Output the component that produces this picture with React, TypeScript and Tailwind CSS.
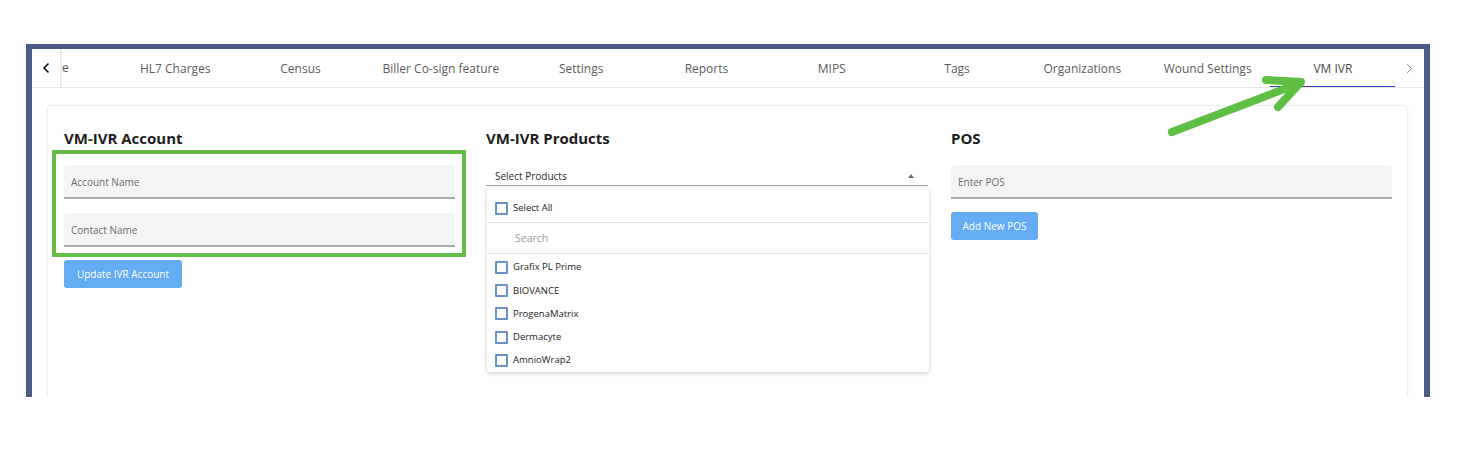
import { ChevronLeft, ChevronRight } from "lucide-react";

const tabs = [
  { label: "HL7 Charges", w: "w-[125.3px]" },
  { label: "Census", w: "w-[125.3px]" },
  { label: "Biller Co-sign feature", w: "w-[155.3px]" },
  { label: "Settings", w: "w-[125.3px]" },
  { label: "Reports", w: "w-[125.3px]" },
  { label: "MIPS", w: "w-[125.3px]" },
  { label: "Tags", w: "w-[125.3px]" },
  { label: "Organizations", w: "w-[125.3px]" },
  { label: "Wound Settings", w: "w-[125.3px]" },
  { label: "VM IVR", w: "w-[125.3px]", active: true },
];

const products = ["Grafix PL Prime", "BIOVANCE", "ProgenaMatrix", "Dermacyte", "AmnioWrap2"];

function Checkbox() {
  return <span className="block h-[13px] w-[13px] shrink-0 rounded-[1px] border-2 border-[#6990ca]" />;
}

function FilledInput({ label }: { label: string }) {
  return (
    <div className="flex h-[34px] items-center rounded-t-[4px] border-b-2 border-[#ababab] bg-[#f4f4f4] pl-[7px] pt-[3px] text-[10px] text-[#6b6b6b]">
      {label}
    </div>
  );
}

function Heading({ children }: { children: string }) {
  return <h2 className="h-[24px] text-[15px] font-bold leading-[24px] text-[#1d1d1d]">{children}</h2>;
}

export default function App() {
  return (
    <div className="relative h-[462px] w-[1472px] bg-white pl-[26px] pt-[44px] font-['Open_Sans',sans-serif]">
      <div className="h-[353px] w-[1404px] overflow-hidden border-x-[6px] border-t-[5px] border-[#4b5a87] bg-white">
        {/* tab bar */}
        <div className="flex h-[39px] border-b border-[#e7e7e7]">
          <div className="flex w-[30px] items-center justify-center border-r-2 border-[#ececec]">
            <ChevronLeft size={16} strokeWidth={2.6} className="text-[#111]" />
          </div>
          <div className="flex flex-1 overflow-hidden">
            <div className="flex w-[50.6px] shrink-0 items-center text-[12px] text-[#5c5c5c]">e</div>
            {tabs.map((t) => (
              <div
                key={t.label}
                className={`relative flex shrink-0 items-center justify-center whitespace-nowrap pt-[1px] text-[12px] ${t.w} ${t.active ? "text-[#4a4a4a]" : "text-[#5c5c5c]"}`}
              >
                {t.label}
                {t.active ? <span className="absolute bottom-[-1px] left-0 h-[2px] w-full bg-[#3d3dc6]" /> : null}
              </div>
            ))}
          </div>
          <div className="flex w-[29px] items-center justify-center">
            <ChevronRight size={17} strokeWidth={1.4} className="text-[#8a8a8a]" />
          </div>
        </div>

        {/* card */}
        <div className="ml-[15px] mt-[17px] h-[400px] w-[1361px] rounded-[4px] border border-[#eeeeee] pl-[16px] pt-[20px] shadow-[0_0_3px_rgba(0,0,0,0.05)]">
          <div className="flex">
            <section className="relative w-[391px]">
              <Heading>VM-IVR Account</Heading>
              <div className="mt-[15px]">
                <FilledInput label="Account Name" />
              </div>
              <div className="mt-[14px]">
                <FilledInput label="Contact Name" />
              </div>
              <button className="mt-[13px] h-[28px] w-[118px] rounded-[3px] bg-[#63acf3] text-[10px] text-white">
                Update IVR Account
              </button>
              <div className="pointer-events-none absolute left-[-12px] top-[24px] h-[107px] w-[414px] border-4 border-[#62be48]" />
            </section>

            <section className="ml-[31px] w-[442px]">
              <Heading>VM-IVR Products</Heading>
              <div className="mt-[16px] flex h-[20px] items-center justify-between border-b border-[#9e9e9e] pl-[9px] pr-[14px] pt-[1px] text-[10px] font-medium text-[#2a2a2a]">
                <span>Select Products</span>
                <span className="h-0 w-0 border-x-[3.5px] border-b-[4px] border-x-transparent border-b-[#6a6a6a]" />
              </div>
              <div className="ml-[1px] mt-[3px] w-[442px] rounded-[2px] bg-white shadow-[0_1px_5px_rgba(0,0,0,0.22)]">
                <div className="flex h-[34px] items-center gap-[5px] border-b border-[#e4e4e4] pl-[8px] pt-[6px] text-[9.5px] font-medium text-[#222]">
                  <Checkbox />
                  <span>Select All</span>
                </div>
                <div className="flex h-[31px] items-center border-b border-[#e4e4e4] pl-[28px] pt-[2px] text-[10.5px] text-[#9a9a9a]">
                  Search
                </div>
                <div className="pt-[2px]">
                  {products.map((p) => (
                    <div key={p} className="flex h-[23.2px] items-center gap-[5px] pl-[8px] text-[9.5px] font-medium text-[#222]">
                      <Checkbox />
                      <span>{p}</span>
                    </div>
                  ))}
                </div>
              </div>
            </section>

            <section className="ml-[23px] w-[441px]">
              <Heading>POS</Heading>
              <div className="mt-[15px]">
                <FilledInput label="Enter POS" />
              </div>
              <button className="mt-[13px] h-[28px] w-[87px] rounded-[3px] bg-[#63acf3] text-[10px] text-white">
                Add New POS
              </button>
            </section>
          </div>
        </div>
      </div>

      {/* annotation arrow */}
      <svg className="pointer-events-none absolute left-0 top-0" width={1472} height={462}>
        <g stroke="#5fbf45" strokeWidth={8} strokeLinecap="round" strokeLinejoin="round" fill="none">
          <line x1={1172} y1={132} x2={1300} y2={83} />
          <polyline points="1266,80 1301,82 1278,107" />
        </g>
      </svg>
    </div>
  );
}
